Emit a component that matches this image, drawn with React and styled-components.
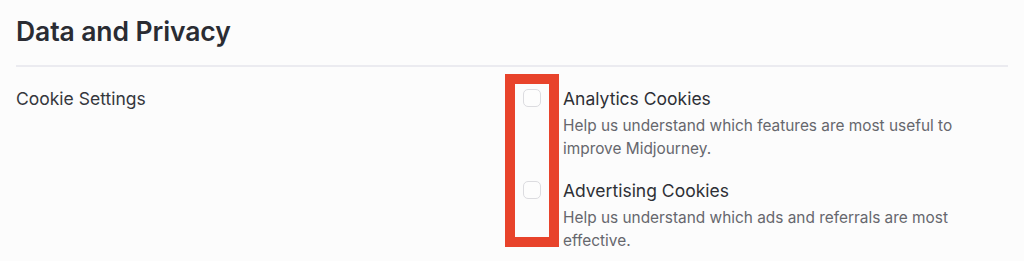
import React from "react";
import styled, { createGlobalStyle } from "styled-components";

const Global = createGlobalStyle`
  html, body { margin: 0; padding: 0; background: #fcfcfc; }
  body { font-family: Inter, "Noto Sans", sans-serif; -webkit-font-smoothing: antialiased; }
`;

const Page = styled.div`
  position: relative;
  width: 1024px;
  height: 261px;
  box-sizing: border-box;
  padding: 0 16px;
  background: #fcfcfc;
  overflow: hidden;
`;

const Title = styled.h2`
  margin: 0;
  padding: 16px 0 19px;
  font-size: 26.5px;
  line-height: 30px;
  font-weight: 600;
  letter-spacing: -0.1px;
  color: #2a2c33;
  border-bottom: 2px solid #ebebf0;
`;

const Row = styled.div`
  display: grid;
  grid-template-columns: 507px 1fr;
  padding-top: 21px;
`;

const Label = styled.div`
  font-size: 17.5px;
  line-height: 22px;
  color: #35373d;
`;

const Options = styled.div`
  display: flex;
  flex-direction: column;
  gap: 20px;
`;

const Option = styled.label`
  display: flex;
  gap: 22px;
  align-items: flex-start;
`;

const Box = styled.span`
  flex: none;
  width: 16px;
  height: 16px;
  margin-top: 1px;
  border: 1px solid #dcdce0;
  border-radius: 5px;
  background: #fdfdfd;
`;

const OptionText = styled.div`
  display: flex;
  flex-direction: column;
`;

const OptionTitle = styled.div`
  font-size: 17.5px;
  line-height: 22px;
  color: #2e3036;
`;

const OptionDesc = styled.div`
  width: 420px;
  margin-top: 4px;
  font-size: 15.4px;
  line-height: 23px;
  color: #66676d;
`;

const Highlight = styled.div`
  position: absolute;
  left: 505px;
  top: 74px;
  width: 54px;
  height: 173px;
  box-sizing: border-box;
  border: 10px solid #e8432b;
  pointer-events: none;
`;

const options = [
  {
    title: "Analytics Cookies",
    desc: "Help us understand which features are most useful to improve Midjourney.",
  },
  {
    title: "Advertising Cookies",
    desc: "Help us understand which ads and referrals are most effective.",
  },
];

export default function App() {
  return (
    <>
      <Global />
      <Page>
        <Title>Data and Privacy</Title>
        <Row>
          <Label>Cookie Settings</Label>
          <Options>
            {options.map((o) => (
              <Option key={o.title}>
                <Box />
                <OptionText>
                  <OptionTitle>{o.title}</OptionTitle>
                  <OptionDesc>{o.desc}</OptionDesc>
                </OptionText>
              </Option>
            ))}
          </Options>
        </Row>
        <Highlight />
      </Page>
    </>
  );
}
